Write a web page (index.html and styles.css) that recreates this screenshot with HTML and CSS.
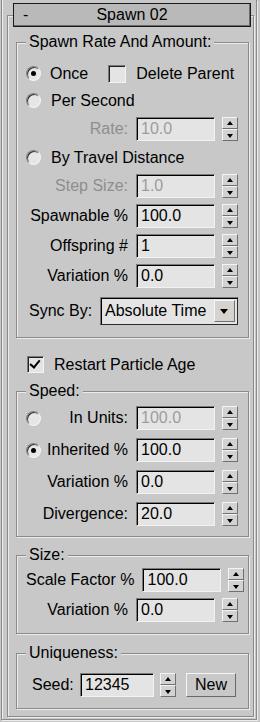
FILE: index.html
```
<!DOCTYPE html>
<html>
<head>
<meta charset="utf-8">
<link rel="stylesheet" href="styles.css">
</head>
<body>
<div class="outer">
  <div class="rollout">
    <div class="rollout-title"><span class="minus">-</span><span class="title-text">Spawn 02</span></div>

    <div class="group g-spawn">
      <span class="group-label">Spawn Rate And Amount:</span>
      <div class="row opt-row">
        <span class="radio checked"></span><span class="opt once">Once</span>
        <span class="check check-delete"></span><span class="opt">Delete Parent</span>
      </div>
      <div class="row opt-row">
        <span class="radio"></span><span class="opt">Per Second</span>
      </div>
      <div class="row spin-row">
        <span class="label disabled">Rate:</span>
        <span class="field disabled">10.0</span>
        <span class="spinner"><span class="up"></span><span class="down"></span></span>
      </div>
      <div class="row opt-row">
        <span class="radio"></span><span class="opt">By Travel Distance</span>
      </div>
      <div class="row spin-row">
        <span class="label disabled">Step Size:</span>
        <span class="field disabled">1.0</span>
        <span class="spinner"><span class="up"></span><span class="down"></span></span>
      </div>
      <div class="row spin-row">
        <span class="label">Spawnable %</span>
        <span class="field">100.0</span>
        <span class="spinner"><span class="up"></span><span class="down"></span></span>
      </div>
      <div class="row spin-row">
        <span class="label">Offspring #</span>
        <span class="field">1</span>
        <span class="spinner"><span class="up"></span><span class="down"></span></span>
      </div>
      <div class="row spin-row">
        <span class="label">Variation %</span>
        <span class="field">0.0</span>
        <span class="spinner"><span class="up"></span><span class="down"></span></span>
      </div>
      <div class="row sync-row">
        <span class="sync-label">Sync By:</span>
        <span class="dropdown"><span class="dd-text">Absolute Time</span><span class="dd-btn"></span></span>
      </div>
    </div>

    <div class="row restart-row">
      <span class="check checked"></span><span class="opt">Restart Particle Age</span>
    </div>

    <div class="group g-speed">
      <span class="group-label">Speed:</span>
      <div class="row spin-row">
        <span class="radio"></span>
        <span class="label">In Units:</span>
        <span class="field disabled">100.0</span>
        <span class="spinner"><span class="up"></span><span class="down"></span></span>
      </div>
      <div class="row spin-row">
        <span class="radio checked"></span>
        <span class="label">Inherited %</span>
        <span class="field">100.0</span>
        <span class="spinner"><span class="up"></span><span class="down"></span></span>
      </div>
      <div class="row spin-row">
        <span class="label">Variation %</span>
        <span class="field">0.0</span>
        <span class="spinner"><span class="up"></span><span class="down"></span></span>
      </div>
      <div class="row spin-row">
        <span class="label">Divergence:</span>
        <span class="field">20.0</span>
        <span class="spinner"><span class="up"></span><span class="down"></span></span>
      </div>
    </div>

    <div class="group g-size">
      <span class="group-label">Size:</span>
      <div class="row spin-row">
        <span class="label">Scale Factor %</span>
        <span class="field">100.0</span>
        <span class="spinner"><span class="up"></span><span class="down"></span></span>
      </div>
      <div class="row spin-row">
        <span class="label">Variation %</span>
        <span class="field">0.0</span>
        <span class="spinner"><span class="up"></span><span class="down"></span></span>
      </div>
    </div>

    <div class="group g-unique">
      <span class="group-label">Uniqueness:</span>
      <div class="row seed-row">
        <span class="seed-label">Seed:</span>
        <span class="field seed-field">12345</span>
        <span class="spinner seed-spin"><span class="up"></span><span class="down"></span></span>
        <span class="button">New</span>
      </div>
    </div>
  </div>
</div>
</body>
</html>
```
FILE: styles.css
```
html, body {
  margin: 0;
  padding: 0;
  background: #c8c8c8;
}
body {
  font-family: "Liberation Sans", Arial, sans-serif;
  font-size: 16px;
  line-height: 18px;
  color: #000;
  width: 260px;
  height: 722px;
  overflow: hidden;
}

/* outer command panel frame */
.outer {
  margin-left: 1px;
  width: 256px;
  height: 720px;
  box-sizing: border-box;
  border: 1px solid #8a8a8a;
  border-top: none;
  box-shadow: inset 1px 0 0 #ececec, 1px 1px 0 #ececec;
  padding-top: 15px;
}

/* rollout */
.rollout {
  position: relative;
  margin-left: 5px;
  width: 247px;
  box-sizing: border-box;
  border: 1px solid #8a8a8a;
  box-shadow: inset 1px 1px 0 #ececec, 1px 1px 0 #ececec;
  padding: 26px 0 7px 0;
  display: flex;
  flex-direction: column;
}
.rollout-title {
  position: absolute;
  top: -13px;
  left: 5px;
  width: 238px;
  height: 24px;
  box-sizing: border-box;
  background: #b9b9b9;
  border: 1px solid #1a1a1a;
  box-shadow: inset -1px -1px 0 #6a6a6a;
  text-align: center;
  line-height: 22px;
}
.minus {
  position: absolute;
  left: 9px;
  top: 0;
}
.title-text {
  display: inline-block;
}

/* group boxes */
.group {
  position: relative;
  margin-left: 8px;
  width: 233px;
  box-sizing: border-box;
  border: 1px solid #8a8a8a;
  box-shadow: inset 1px 1px 0 #ececec, 1px 1px 0 #ececec;
  display: flex;
  flex-direction: column;
  padding-left: 9px;
  padding-right: 10px;
}
.group-label {
  position: absolute;
  top: -10px;
  left: 9px;
  padding: 0 3px;
  background: #c8c8c8;
  white-space: nowrap;
}
.g-spawn {
  padding-top: 20px;
  padding-bottom: 12px;
  gap: 6px;
}
.g-speed {
  margin-top: 16px;
  padding-top: 14px;
  padding-bottom: 10px;
  gap: 8px;
}
.g-size {
  margin-top: 18px;
  padding-top: 12px;
  padding-bottom: 11px;
  gap: 6px;
}
.g-unique {
  margin-top: 19px;
  padding-top: 19px;
  padding-bottom: 11px;
  padding-left: 15px;
}

/* rows */
.row {
  display: flex;
  align-items: center;
  white-space: nowrap;
}
.opt-row {
  height: 21px;
}
.spin-row {
  height: 24px;
}
.sync-row {
  height: 28px;
  margin-top: 3px;
  justify-content: space-between;
}
.sync-label {
  margin-left: 3px;
}
.restart-row {
  height: 21px;
  margin-top: 16px;
  margin-left: 19px;
}
.seed-row {
  height: 24px;
}

.opt {
  margin-left: 10px;
}
.once {
  margin-left: 9px;
}
.label {
  flex: 1;
  text-align: right;
  margin-right: 8px;
}
.disabled {
  color: #8e8e8e;
}
.field.disabled {
  color: #9c9c9c;
}

/* numeric field */
.field {
  display: block;
  width: 79px;
  height: 24px;
  box-sizing: border-box;
  background: #e4e4e4;
  border: 1px solid;
  border-color: #7a7a7a #f2f2f2 #f2f2f2 #7a7a7a;
  box-shadow: inset 1px 1px 0 #000;
  padding-left: 4px;
  line-height: 22px;
  flex: none;
}

/* spinner */
.spinner {
  display: flex;
  flex-direction: column;
  width: 16px;
  height: 24px;
  margin-left: 7px;
  flex: none;
}
.spinner span {
  position: relative;
  flex: 1;
  box-sizing: border-box;
  background: #d2d2d2;
  border: 1px solid;
  border-color: #f4f4f4 #707070 #707070 #f4f4f4;
}
.spinner span::after {
  content: "";
  position: absolute;
  left: 4px;
  width: 0;
  height: 0;
  border-left: 3px solid transparent;
  border-right: 3px solid transparent;
}
.spinner .up::after {
  top: 3px;
  border-bottom: 4px solid #000;
}
.spinner .down::after {
  top: 4px;
  border-top: 4px solid #000;
}

/* radio */
.radio {
  display: block;
  width: 15px;
  height: 15px;
  box-sizing: border-box;
  border-radius: 50%;
  border: 1px solid;
  border-color: #808080 #f4f4f4 #f4f4f4 #808080;
  box-shadow: inset 1px 1px 0 #303030;
  background: #e6e6e6;
  position: relative;
  flex: none;
}
.radio.checked::after {
  content: "";
  position: absolute;
  left: 4px;
  top: 4px;
  width: 5px;
  height: 5px;
  border-radius: 50%;
  background: #000;
}

/* checkbox */
.check {
  display: block;
  width: 17px;
  height: 17px;
  box-sizing: border-box;
  border: 1px solid;
  border-color: #7a7a7a #f2f2f2 #f2f2f2 #7a7a7a;
  box-shadow: inset 1px 1px 0 #202020;
  background: #e4e4e4;
  position: relative;
  flex: none;
}
.check-delete {
  margin-left: 20px;
  width: 18px;
  height: 18px;
}
.check.checked::after {
  content: "";
  position: absolute;
  left: 4px;
  top: 1px;
  width: 4px;
  height: 8px;
  border-right: 2px solid #000;
  border-bottom: 2px solid #000;
  transform: rotate(40deg);
}

/* dropdown */
.dropdown {
  position: relative;
  display: flex;
  align-items: center;
  width: 138px;
  height: 28px;
  box-sizing: border-box;
  background: #e4e4e4;
  border: 1px solid;
  border-color: #7a7a7a #2a2a2a #2a2a2a #7a7a7a;
  box-shadow: inset 1px 1px 0 #000;
  padding: 2px;
}
.dd-text {
  flex: 1;
  padding-left: 2px;
}
.dd-btn {
  position: relative;
  width: 21px;
  height: 22px;
  box-sizing: border-box;
  background: #d6d3ce;
  border: 1px solid;
  border-color: #f6f6f6 #707070 #707070 #f6f6f6;
  flex: none;
}
.dd-btn::after {
  content: "";
  position: absolute;
  left: 5px;
  top: 8px;
  border-left: 4px solid transparent;
  border-right: 4px solid transparent;
  border-top: 5px solid #000;
}

/* seed row */
.seed-label {
  width: 48px;
}
.seed-field {
  width: 74px;
}
.seed-spin {
  margin-left: 6px;
}
.button {
  display: block;
  margin-left: 10px;
  width: 50px;
  height: 24px;
  box-sizing: border-box;
  border: 1px solid;
  border-color: #f4f4f4 #6a6a6a #6a6a6a #f4f4f4;
  background: #c8c8c8;
  text-align: center;
  line-height: 22px;
}
```
